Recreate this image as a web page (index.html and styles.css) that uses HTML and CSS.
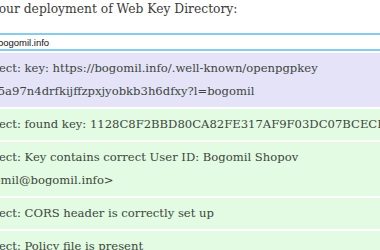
FILE: index.html
```html
<!DOCTYPE html>
<html lang="en">
<head>
    <meta charset="UTF-8">
    <meta name="viewport" content="width=device-width, initial-scale=1.0">
    <title>WKD Checker</title>
    <link rel="stylesheet" href="styles.css">
</head>
<body>
    <div class="page">
        <p class="intro">Test your deployment of Web Key Directory:</p>

        <!-- Address to check -->
        <div class="field">
            <input class="email" type="text" value="bogomil@bogomil.info">
        </div>

        <!-- Check results -->
        <div class="results">
            <div class="result info">Correct: key: https://bogomil.info/.well-known/openpgpkey<span class="cont">/hu/5a97n4drfkijffzpxjyobkb3h6dfxy?l=bogomil</span></div>
            <div class="result ok">Correct: found key: 1128C8F2BBD80CA82FE317AF9F03DC07BCECF</div>
            <div class="result ok">Correct: Key contains correct User ID: Bogomil Shopov<span class="cont uid">&lt;bogomil@bogomil.info&gt;</span></div>
            <div class="result ok">Correct: CORS header is correctly set up</div>
            <div class="result ok">Correct: Policy file is present</div>
        </div>
    </div>
</body>
</html>
```

FILE: styles.css
```css
body {
    margin: 0;
    background-color: #fff;
    color: #3b3b3b;
    font-family: 'DejaVu Serif', 'Liberation Serif', serif;
    overflow: hidden;
}
.page {
    margin-left: -28px;
    width: 520px;
}
.intro {
    margin: 0 0 15px -10px;
    font-size: 12.3px;
    line-height: 18px;
}
.field {
    margin-bottom: 2px;
}
.email {
    display: block;
    box-sizing: border-box;
    width: 100%;
    height: 18px;
    margin: 0;
    padding: 0;
    border: none;
    border-top: 2px solid #86cceb;
    border-bottom: 2px solid #86cceb;
    text-indent: -17px;
    font-family: 'Liberation Sans', sans-serif;
    font-size: 9.5px;
    color: #111;
    outline: none;
}
.result {
    padding: 4px 0;
    margin-bottom: 2px;
    font-size: 11.6px;
    line-height: 23px;
    color: #3c463c;
    white-space: nowrap;
}
/* wrapped second line */
.cont {
    display: block;
    margin-left: 3px;
}
.uid {
    margin-left: -10px;
}
.info {
    background-color: #e5e3f8;
}
.ok {
    background-color: #e2fbe2;
}
```
